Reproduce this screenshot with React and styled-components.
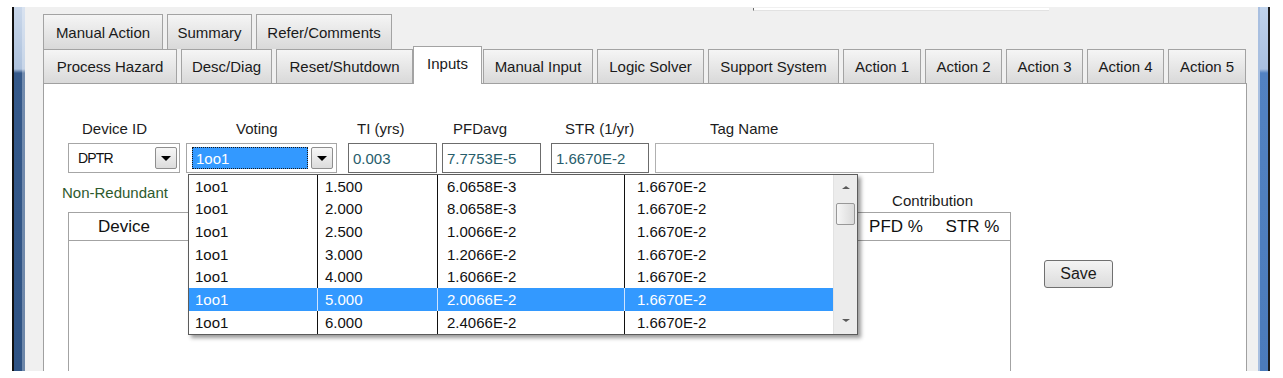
import styled, { createGlobalStyle } from "styled-components";

const GlobalStyle = createGlobalStyle`
  html, body {
    margin: 0;
    padding: 0;
    background: #fff;
  }
  body {
    font-family: "Liberation Sans", Arial, sans-serif;
    font-size: 15px;
    color: #1b1b1b;
  }
`;

const Page = styled.div`
  width: 1283px;
  height: 378px;
  box-sizing: border-box;
  padding: 7px 13px 7px 12px;
  display: flex;
  overflow: hidden;
`;

const LeftFrame = styled.div`
  width: 13px;
  box-sizing: border-box;
  border-left: 2px solid #111;
  background: linear-gradient(
    to bottom,
    #c9d7ea 0,
    #aec2dd 62px,
    #35598a 66px,
    #2f5384 100%
  );
  box-shadow: inset -3px 0 0 rgba(255, 255, 255, 0.3);
`;

const RightFrame = styled.div`
  width: 12px;
  box-sizing: border-box;
  border-right: 2px solid #1c1c1c;
  background: linear-gradient(
    to bottom,
    #c0d3ec 0,
    #a9c0e0 62px,
    #5282c2 66px,
    #4b7bbb 100%
  );
  box-shadow: inset 2px 0 0 #a8bfe0;
`;

const Workspace = styled.div`
  flex: 1;
  background: #f0f0f0;
  padding: 0 11px 0 18px;
  display: flex;
  flex-direction: column;
  overflow: hidden;
`;

const TopStrip = styled.div`
  height: 7px;
  display: flex;
  align-items: flex-start;
`;

const Stub = styled.div`
  margin: 1px 0 0 710px;
  width: 295px;
  height: 2px;
  background: #fff;
  border-left: 1px solid #6b6b6b;
  border-bottom: 1px solid #e2e2e2;
`;

const TabRow = styled.div`
  display: flex;
  gap: 4px;
  height: ${(p) => p.$h}px;
`;

const Tab = styled.div`
  width: ${(p) => p.$w}px;
  height: 100%;
  box-sizing: border-box;
  border: 1px solid #a3a3a3;
  border-bottom: none;
  background: linear-gradient(to bottom, #f5f5f5, #d9d9d9);
  display: flex;
  align-items: center;
  justify-content: center;
  white-space: nowrap;
  color: #1a1a1a;
`;

const ActiveTab = styled(Tab)`
  position: relative;
  z-index: 2;
  height: 38px;
  margin: -3px -3px 0 -4px;
  padding-bottom: 4px;
  background: #fff;
`;

const Panel = styled.div`
  flex: 1;
  background: #fff;
  border: 1px solid #a0a0a0;
  border-bottom: none;
  padding: 36px 0 0 24px;
  display: flex;
  flex-direction: column;
`;

const FormRow = styled.div`
  display: flex;
  align-items: flex-end;
`;

const Group = styled.div`
  position: relative;
  display: flex;
  flex-direction: column;
  width: ${(p) => p.$w}px;
  margin-left: ${(p) => p.$ml}px;
`;

const Label = styled.div`
  height: 18px;
  line-height: 18px;
  padding-left: ${(p) => p.$lp}px;
  margin-bottom: 5px;
  white-space: nowrap;
  color: #1c1c1c;
`;

const Combo = styled.div`
  height: 30px;
  box-sizing: border-box;
  border: 1px solid #a6a6a6;
  background: #fff;
  display: flex;
  align-items: center;
  padding: 0 ${(p) => p.$pr}px 0 ${(p) => p.$pl}px;
`;

const ComboText = styled.div`
  flex: 1;
  font-size: 14px;
  letter-spacing: -0.8px;
  color: #111;
`;

const Selection = styled.div`
  flex: 1;
  height: 22px;
  margin-right: 3px;
  box-sizing: border-box;
  background: #3399ff;
  border: 1px dotted #1a1a1a;
  color: #fff;
  padding-left: 3px;
  display: flex;
  align-items: center;
`;

const DropButton = styled.div`
  width: 22px;
  height: 22px;
  box-sizing: border-box;
  border: 1px solid #8e8e8e;
  border-radius: 2px;
  background: linear-gradient(to bottom, #f7f7f7, #dcdcdc);
  display: flex;
  align-items: center;
  justify-content: center;
`;

const Caret = styled.div`
  width: 0;
  height: 0;
  border-left: ${(p) => p.$s}px solid transparent;
  border-right: ${(p) => p.$s}px solid transparent;
  ${(p) => (p.$up ? "border-bottom" : "border-top")}: ${(p) => p.$h ?? p.$s}px solid
    ${(p) => p.$c};
`;

const TextBox = styled.div`
  height: 30px;
  box-sizing: border-box;
  border: 1px solid ${(p) => (p.$light ? "#b0b0b0" : "#6c6c6c")};
  background: #fff;
  padding-left: 4px;
  display: flex;
  align-items: center;
  color: #275d6b;
`;

const DropList = styled.div`
  position: absolute;
  top: calc(100% + 1px);
  left: 2px;
  z-index: 5;
  width: 670px;
  box-sizing: border-box;
  border: 1px solid #5c5c5c;
  background: #fff;
  display: flex;
  box-shadow: 3px 3px 4px rgba(0, 0, 0, 0.4);
`;

const ListRows = styled.div`
  width: 644px;
  display: flex;
  flex-direction: column;
`;

const ListRow = styled.div`
  display: flex;
  height: 22.67px;
  background: ${(p) => (p.$sel ? "#3399ff" : "#fff")};
  color: ${(p) => (p.$sel ? "#fff" : "#111")};
`;

const Cell = styled.div`
  width: ${(p) => p.$w}px;
  box-sizing: border-box;
  padding-left: ${(p) => p.$pl}px;
  border-left: ${(p) =>
    p.$first ? "none" : `1px solid ${p.$sel ? "#cfe4ff" : "#111"}`};
  display: flex;
  align-items: center;
  white-space: nowrap;
`;

const ScrollBar = styled.div`
  flex: 1;
  background: #ececec;
  border-left: 1px solid #e2e2e2;
  display: flex;
  flex-direction: column;
  align-items: center;
`;

const ArrowBox = styled.div`
  height: ${(p) => p.$h}px;
  display: flex;
  align-items: center;
  justify-content: center;
`;

const Thumb = styled.div`
  margin-top: 4px;
  width: 19px;
  height: 22px;
  box-sizing: border-box;
  border: 1px solid #989898;
  border-radius: 2px;
  background: linear-gradient(to right, #f6f6f6, #dadada);
`;

const Spacer = styled.div`
  flex: 1;
`;

const LowerRow = styled.div`
  flex: 1;
  margin-top: 11px;
  display: flex;
  align-items: flex-start;
`;

const TableBlock = styled.div`
  width: 943px;
  align-self: stretch;
  display: flex;
  flex-direction: column;
`;

const Captions = styled.div`
  height: 28px;
  display: flex;
`;

const Redundancy = styled.div`
  margin-left: -6px;
  line-height: 18px;
  color: #2e5a2e;
  white-space: nowrap;
`;

const Contribution = styled.div`
  margin: 0 38px 2px auto;
  align-self: flex-end;
  line-height: 18px;
  color: #1a1a1a;
`;

const Table = styled.div`
  flex: 1;
  border: 1px solid #a3a3a3;
  border-bottom: none;
  display: flex;
  flex-direction: column;
`;

const TableHead = styled.div`
  height: 27px;
  border-bottom: 1px solid #a3a3a3;
  display: flex;
  align-items: center;
`;

const HeadCell = styled.div`
  width: ${(p) => p.$w}px;
  text-align: center;
  font-size: 17px;
  color: #111;
  white-space: nowrap;
`;

const SaveButton = styled.div`
  margin: 76px 0 0 33px;
  width: 69px;
  height: 28px;
  box-sizing: border-box;
  border: 1px solid #707070;
  border-radius: 3px;
  background: linear-gradient(to bottom, #f4f4f4, #dcdcdc);
  display: flex;
  align-items: center;
  justify-content: center;
  font-size: 16px;
  color: #1b1b1b;
`;

const backTabs = [
  { name: "Manual Action", w: 120 },
  { name: "Summary", w: 85 },
  { name: "Refer/Comments", w: 136 },
];

const frontTabs = [
  { name: "Process Hazard", w: 134 },
  { name: "Desc/Diag", w: 91 },
  { name: "Reset/Shutdown", w: 137 },
  { name: "Inputs", w: 69, active: true },
  { name: "Manual Input", w: 110 },
  { name: "Logic Solver", w: 107 },
  { name: "Support System", w: 131 },
  { name: "Action 1", w: 78 },
  { name: "Action 2", w: 77 },
  { name: "Action 3", w: 77 },
  { name: "Action 4", w: 77 },
  { name: "Action 5", w: 78 },
];

const columns = [
  { w: 128, pl: 6 },
  { w: 120, pl: 7 },
  { w: 187, pl: 9 },
  { w: 209, pl: 12 },
];

const tiRows = [
  ["1oo1", "1.500", "6.0658E-3", "1.6670E-2"],
  ["1oo1", "2.000", "8.0658E-3", "1.6670E-2"],
  ["1oo1", "2.500", "1.0066E-2", "1.6670E-2"],
  ["1oo1", "3.000", "1.2066E-2", "1.6670E-2"],
  ["1oo1", "4.000", "1.6066E-2", "1.6670E-2"],
  ["1oo1", "5.000", "2.0066E-2", "1.6670E-2"],
  ["1oo1", "6.000", "2.4066E-2", "1.6670E-2"],
];

const selectedRow = 5;

const App = () => {
  return (
    <>
      <GlobalStyle />
      <Page>
        <LeftFrame />
        <Workspace>
          <TopStrip>
            <Stub />
          </TopStrip>
          <TabRow $h={35}>
            {backTabs.map((t) => (
              <Tab key={t.name} $w={t.w}>
                {t.name}
              </Tab>
            ))}
          </TabRow>
          <TabRow $h={34}>
            {frontTabs.map((t) =>
              t.active ? (
                <ActiveTab key={t.name} $w={t.w}>
                  {t.name}
                </ActiveTab>
              ) : (
                <Tab key={t.name} $w={t.w}>
                  {t.name}
                </Tab>
              )
            )}
          </TabRow>
          <Panel>
            <FormRow>
              <Group $w={112} $ml={0}>
                <Label $lp={14}>Device ID</Label>
                <Combo $pl={9} $pr={2}>
                  <ComboText>DPTR</ComboText>
                  <DropButton>
                    <Caret $s={5} $h={5} $c="#000" />
                  </DropButton>
                </Combo>
              </Group>
              <Group $w={151} $ml={6}>
                <Label $lp={50}>Voting</Label>
                <Combo $pl={5} $pr={3}>
                  <Selection>1oo1</Selection>
                  <DropButton>
                    <Caret $s={5} $h={5} $c="#000" />
                  </DropButton>
                </Combo>
                <DropList>
                  <ListRows>
                    {tiRows.map((row, i) => (
                      <ListRow key={row[1]} $sel={i === selectedRow}>
                        {row.map((v, j) => (
                          <Cell
                            key={j}
                            $w={columns[j].w}
                            $pl={columns[j].pl}
                            $first={j === 0}
                            $sel={i === selectedRow}
                          >
                            {v}
                          </Cell>
                        ))}
                      </ListRow>
                    ))}
                  </ListRows>
                  <ScrollBar>
                    <ArrowBox $h={24}>
                      <Caret $s={4} $h={3} $c="#5a5a5a" $up />
                    </ArrowBox>
                    <Thumb />
                    <Spacer />
                    <ArrowBox $h={26}>
                      <Caret $s={4} $h={3} $c="#5a5a5a" />
                    </ArrowBox>
                  </ScrollBar>
                </DropList>
              </Group>
              <Group $w={89} $ml={11}>
                <Label $lp={9}>TI (yrs)</Label>
                <TextBox>0.003</TextBox>
              </Group>
              <Group $w={99} $ml={5}>
                <Label $lp={11}>PFDavg</Label>
                <TextBox>7.7753E-5</TextBox>
              </Group>
              <Group $w={98} $ml={10}>
                <Label $lp={14}>STR (1/yr)</Label>
                <TextBox>1.6670E-2</TextBox>
              </Group>
              <Group $w={279} $ml={6}>
                <Label $lp={55}>Tag Name</Label>
                <TextBox $light />
              </Group>
            </FormRow>
            <LowerRow>
              <TableBlock>
                <Captions>
                  <Redundancy>Non-Redundant</Redundancy>
                  <Contribution>Contribution</Contribution>
                </Captions>
                <Table>
                  <TableHead>
                    <HeadCell $w={110}>Device</HeadCell>
                    <Spacer />
                    <HeadCell $w={78}>PFD %</HeadCell>
                    <HeadCell $w={75}>STR %</HeadCell>
                  </TableHead>
                </Table>
              </TableBlock>
              <SaveButton>Save</SaveButton>
            </LowerRow>
          </Panel>
        </Workspace>
        <RightFrame />
      </Page>
    </>
  );
};

export default App;
